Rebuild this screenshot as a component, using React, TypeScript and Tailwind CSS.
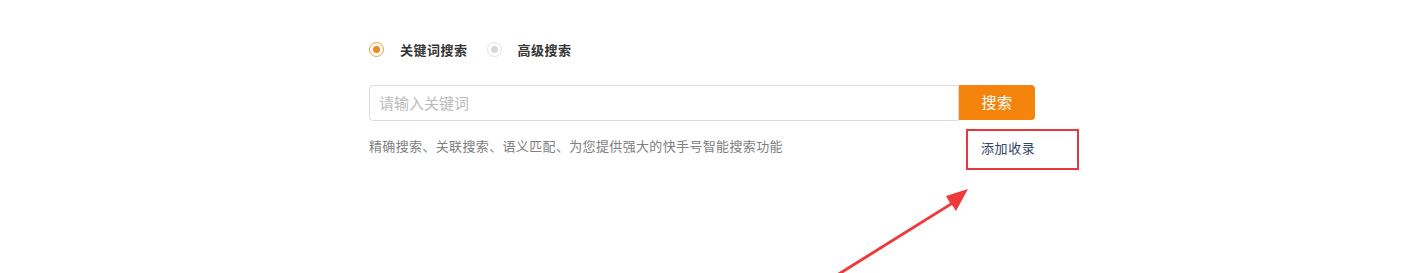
import React from "react";

export default function App() {
  return (
    <div
      className="relative w-[1415px] h-[273px] bg-white overflow-hidden"
      style={{ fontFamily: '"Noto Sans CJK SC", "Noto Sans", sans-serif' }}
    >
      <div className="pl-[369px] pt-[39px] w-[1100px]">
        <div className="flex items-center h-[20px]">
          <span className="w-[15px] h-[15px] rounded-full border border-[#f39a3c] flex items-center justify-center">
            <span className="w-[7px] h-[7px] rounded-full bg-[#f08a1a]" />
          </span>
          <span className="ml-[16px] text-[13px] tracking-[0.5px] font-bold text-[#333] leading-none">关键词搜索</span>
          <span className="ml-[19px] w-[15px] h-[15px] rounded-full border border-[#e2e2e2] flex items-center justify-center">
            <span className="w-[7px] h-[7px] rounded-full bg-[#d8d8d8]" />
          </span>
          <span className="ml-[16px] text-[13px] tracking-[0.5px] font-bold text-[#333] leading-none">高级搜索</span>
        </div>
        <div className="flex mt-[26px] w-[666px] h-[36px]">
          <div className="flex-1 border border-[#dcdcdc] rounded-l-[4px] flex items-center pl-[9px] text-[15px] text-[#bbbbbb]">
            请输入关键词
          </div>
          <div className="w-[76px] h-[35px] bg-[#f5840c] rounded-r-[4px] flex items-center justify-center text-white text-[15px] tracking-[0.5px]">
            搜索
          </div>
        </div>
        <div className="flex items-start mt-[8px] w-[710px]">
          <div className="mt-[8px] text-[13px] tracking-[0.35px] text-[#808080] leading-[18px] flex-1">
            精确搜索、关联搜索、语义匹配、为您提供强大的快手号智能搜索功能
          </div>
          <div className="w-[113px] h-[41px] border-2 border-[#e8383d] flex items-center pl-[13px] pb-[4px] text-[13px] tracking-[0.6px] text-[#2f4466]">
            添加收录
          </div>
        </div>
      </div>
      <svg className="absolute left-0 top-0" width="1415" height="273" viewBox="0 0 1415 273">
        <polygon
          points="836,274 950,203 946,196 968,189 956,211 952,205 840,275"
          fill="#ee3a3a"
        />
      </svg>
    </div>
  );
}
